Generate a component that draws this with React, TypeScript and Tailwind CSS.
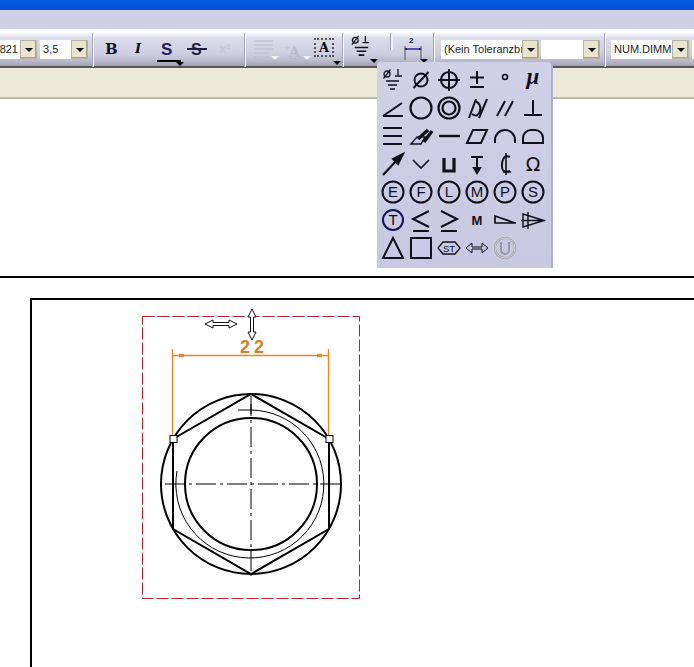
const ink = "#10101c";

function Combo({ value, width, className = "", clip }: any) {
  return (
    <div style={{ width }} className={"flex h-[19px] shrink-0 items-stretch bg-white " + (clip ? "" : "pl-[3px] ") + className}>
      <span className={"flex flex-1 overflow-hidden whitespace-nowrap text-[11px] leading-[18px] text-[#222] " + (clip ? "justify-end pr-[2px]" : "")}>{value}</span>
      <div className="flex w-[17px] shrink-0 items-center justify-center border border-[#b8b49c] bg-[#e8e4d0] shadow-[inset_-1px_-1px_0_#a8a490]">
        <Caret />
      </div>
    </div>
  );
}

function Caret({ light }: any) {
  return (
    <div className={"h-0 w-0 border-x-[4px] border-t-[4px] border-x-transparent " + (light ? "border-t-[#f0f0f4]" : "border-t-black")} />
  );
}

function Sep({ ml, mr }: any) {
  return (
    <div style={{ marginLeft: ml, marginRight: mr }} className="h-[34px] w-[2px] shrink-0 self-start border-l border-[#a4a4b8] bg-white" />
  );
}

function ToleranceIcon({ size = 24 }: any) {
  return (
    <svg width={size} height={size} viewBox="0 0 24 24" stroke={ink} fill="none" strokeWidth="1.3">
      <circle cx="5.5" cy="5.5" r="3" />
      <path d="M2 10L9 1" />
      <path d="M16 1v6M13 8h7" />
      <path d="M5 13h14M7 17h10M9 21h6" strokeWidth="1.6" />
    </svg>
  );
}

function Cell({ children }: any) {
  return (
    <div className="flex h-[28px] w-[28px] items-center justify-center">
      <svg width="28" height="28" viewBox="0 0 28 28" fill="none" stroke={ink} strokeWidth="2">
        {children}
      </svg>
    </div>
  );
}

function Letter({ ch, size = 12 }: any) {
  return (
    <text x="14" y={14 + size * 0.36} textAnchor="middle" fontSize={size} fontFamily="'Liberation Sans', sans-serif" stroke="none" fill={ink}>
      {ch}
    </text>
  );
}

function CircleLetter({ ch }: any) {
  return (
    <>
      <circle cx="14" cy="14" r="10.5" fill="none" />
      <Letter ch={ch} size={15} />
    </>
  );
}

const symbols: any[] = [
  <g transform="translate(3 3)" strokeWidth="1.3">
    <circle cx="5" cy="5" r="3" />
    <path d="M1.5 9.5L8.5 .5M16 0v6M13 7h7" />
    <path d="M4 12h13M6 16h9M8 20h5" strokeWidth="1.7" />
  </g>,
  <>
    <circle cx="14" cy="14" r="6.5" />
    <path d="M6.5 22L21.5 6" />
  </>,
  <>
    <circle cx="14" cy="14" r="8" strokeWidth="2.2" />
    <path d="M14 3v22M3 14h22" />
  </>,
  <path d="M14 5v13M7 11.5h14M7 21h14" />,
  <circle cx="14" cy="11" r="2.5" strokeWidth="1.6" />,
  <text x="14" y="18" textAnchor="middle" fontSize="23" fontWeight="bold" fontStyle="italic" fontFamily="'Liberation Serif', serif" stroke="none" fill={ink}>μ</text>,

  <path d="M4 22L23 9M4 22h20" />,
  <circle cx="14" cy="14" r="10.5" strokeWidth="2.2" />,
  <>
    <circle cx="14" cy="14" r="10.5" strokeWidth="2.2" />
    <circle cx="14" cy="14" r="6.5" strokeWidth="2.2" />
  </>,
  <>
    <path d="M6 24L13 5M16 24L24 5" />
    <path d="M12 7q7 3 5 10t-8 3" />
  </>,
  <path d="M6 22L14 7M14 22L22 7" />,
  <path d="M14 6v15M5 21h18" />,

  <path d="M4 6h19M4 14h19M4 22h19" strokeWidth="2.2" />,
  <>
    <path d="M4 22L10 15h8l-4 7z" strokeWidth="1.4" />
    <path d="M11 17L21 8M17 20L25 9" strokeWidth="3.4" />
  </>,
  <path d="M4 14h21" strokeWidth="2.4" />,
  <path d="M10 8h14l-6 13H4z" />,
  <path d="M4 21v-3a10 10 0 0 1 20 0v3" />,
  <path d="M4 21h20v-5a8 8 0 0 0-8-8h-4a8 8 0 0 0-8 8z" />,

  <>
    <path d="M4 25L18 10" strokeWidth="2.2" />
    <path d="M24 4L14 9l5 5z" fill={ink} />
  </>,
  <path d="M6 10l8 8 8-8" strokeWidth="1.6" />,
  <path d="M9 8v13h10V8" strokeWidth="3.2" />,
  <>
    <path d="M8 7h12M14 7v13" />
    <path d="M11 18l3 5 3-5z" fill={ink} />
  </>,
  <>
    <path d="M19 7q-7-3-8 7t8 7" />
    <path d="M15 3v22M12 22h8" strokeWidth="1.6" />
  </>,
  <text x="14" y="21" textAnchor="middle" fontSize="19" fontFamily="'DejaVu Sans', sans-serif" stroke="none" fill={ink}>Ω</text>,

  <CircleLetter ch="E" />,
  <CircleLetter ch="F" />,
  <CircleLetter ch="L" />,
  <CircleLetter ch="M" />,
  <CircleLetter ch="P" />,
  <CircleLetter ch="S" />,

  <g stroke="#14145a">
    <circle cx="14" cy="14" r="10" />
    <Letter ch="T" size={15} />
  </g>,
  <path d="M22 5L6 13l16 8M6 25h16" />,
  <path d="M6 5l16 8-16 8M6 25h16" />,
  <text x="14" y="19" textAnchor="middle" fontSize="13" fontWeight="bold" fontFamily="'Liberation Sans', sans-serif" stroke="none" fill={ink}>M</text>,
  <path d="M4 10l20 7H4zM4 17h21" strokeWidth="1.7" />,
  <path d="M4 8l21 6.500L4 21zM9 6v17M2 14.500h24" strokeWidth="1.400" />,

  <path d="M14 4L24 24H4z" />,
  <path d="M4 4h20v20H4z" />,
  <>
    <path d="M3 14l5-6h12l5 6-5 6H8z" strokeWidth="1.3" />
    <text x="14" y="17.500" textAnchor="middle" fontSize="9.500" fontFamily="'Liberation Sans', sans-serif" stroke="none" fill={ink}>ST</text>
  </>,
  <path d="M3 14l6-5v4h10V9l6 5-6 5v-4H9v4z" strokeWidth="1" />,
  <>
    <circle cx="14" cy="14" r="10" stroke="#9a9a9c" />
    <path d="M10 8v8a4 4 0 0 0 8 0V8" stroke="#9a9a9c" />
    <circle cx="14" cy="14" r="10" stroke="#e8e8ee" strokeWidth=".7" />
  </>,
];

function Palette() {
  return (
    <div className="absolute left-[377px] top-[62px] grid h-[206px] w-[176px] grid-cols-[repeat(6,28px)] content-start rounded-t-[4px] border-r-2 border-[#b0b0c8] bg-gradient-to-b from-[#d0d0e6] to-[#c8c8e2] pl-[2px] pt-[4px]">
      {symbols.map((s, i) => (
        <Cell key={i}>{s}</Cell>
      ))}
    </div>
  );
}

function Toolbar() {
  return (
    <div className="relative flex h-[39px] shrink-0 items-start border-b-2 border-[#55555c] bg-[linear-gradient(to_bottom,#ffffff_0%,#ffffff_8%,#dcdcea_24%,#cdcde0_70%,#b4b4c6_90%,#a0a0b2_100%)] pt-[4px]">
      <div className="mt-[7px] flex">
        <Combo value="2821" width={37} clip />
        <Combo value="3,5" width={48} className="ml-[3px]" />
      </div>
      <Sep ml={4} mr={0} />
      <div className="relative mt-[7px] flex h-[26px] w-[150px] shrink-0 items-start text-[#10102a]">
        <span className="absolute left-[11px] top-[-2px] font-['DejaVu_Serif'] text-[15px] font-bold">B</span>
        <span className="absolute left-[41px] top-[-1px] font-['DejaVu_Serif'] text-[13px] font-bold italic">I</span>
        <span className="absolute left-[67px] top-[-3px] text-[17px] font-bold text-[#1c1c60]">S</span>
        <div className="absolute left-[63px] top-[20px] h-[1.500px] w-[24px] bg-black" />
        <div className="absolute left-[82px] top-[22px] h-0 w-0 border-x-[4px] border-t-[4px] border-x-transparent border-t-black" />
        <span className="absolute left-[97px] top-[-2px] text-[16px] font-bold text-[#1c1c40]">S</span>
        <div className="absolute left-[93px] top-[8px] h-[1.500px] w-[20px] bg-[#1c1c40]" />
        <span className="absolute left-[125px] top-[-1px] text-[13px] font-bold text-[#c6c6d0]">x²</span>
      </div>
      <Sep ml={0} mr={0} />
      <div className="relative mt-[3px] h-[30px] w-[96px] shrink-0">
        <svg className="absolute left-[7px] top-[3px]" width="26" height="20" viewBox="0 0 26 20" stroke="#bcbcc8" strokeWidth="1.200">
          <path d="M1 2h19M1 6h19M1 10h19M1 14h15M1 18h15" />
        </svg>
        <span className="absolute left-[25px] top-[20px]"><Caret light /></span>
        <span className="absolute left-[38px] top-[3px] text-[11px] text-[#c4c4ce]">+</span>
        <span className="absolute left-[43px] top-[6px] font-['DejaVu_Serif'] text-[14px] font-bold text-[#bcbcc8] underline">A</span>
        <span className="absolute left-[57px] top-[20px]"><Caret light /></span>
        <div className="absolute left-[68px] top-[2px] flex h-[19px] w-[20px] items-center justify-center border-2 border-dotted border-[#55555f] font-['DejaVu_Serif'] text-[13px] font-bold text-black">A</div>
        <span className="absolute left-[87px] top-[25px]"><Caret /></span>
      </div>
      <Sep ml={0} mr={0} />
      <div className="relative mt-[1px] h-[32px] w-[50px] shrink-0">
        <span className="absolute left-[6px] top-[1px]"><ToleranceIcon size={23} /></span>
        <span className="absolute left-[26px] top-[25px]"><Caret /></span>
        <div className="absolute left-[47px] top-[-1px] h-[17px] w-[2px] bg-[#f0f0f6] shadow-[-1px_0_0_#a0a0b4]" />
      </div>
      <div className="relative mt-[1px] h-[32px] w-[39px] shrink-0">
        <svg className="absolute left-[9px] top-[7px]" width="20" height="22" viewBox="0 0 20 22" fill="none">
          <path d="M2 8h16" stroke="#2424a8" strokeWidth="1.500" />
          <path d="M2 5v14M18 5v14" stroke="#505060" />
          <path d="M1 8l3-1v2zM19 8l-3-1v2z" fill="#10104a" />
        </svg>
        <span className="absolute left-[15px] top-[1px] text-[8px] font-bold text-[#14143c]">2</span>
        <span className="absolute left-[26px] top-[25px]"><Caret /></span>
      </div>
      <Sep ml={0} mr={6} />
      <div className="mt-[7px] flex">
        <Combo value="(Kein Toleranzbı" width={98} />
        <Combo value="" width={59} className="ml-[2px]" />
      </div>
      <Sep ml={4} mr={5} />
      <div className="mt-[7px] flex">
        <Combo value="NUM.DIMM" width={78} />
        <div className="ml-[3px] h-[19px] w-[10px] bg-white" />
      </div>
    </div>
  );
}

function Drawing() {
  return (
    <svg className="block h-[367px] w-[662px]" viewBox="32 300 662 367" fill="none">
      <rect x="142.500" y="316.500" width="217" height="282" stroke="#bc2030" strokeDasharray="12 3" />

      <path d="M205 324l8-4v2.500h16V320l8 4-8 4v-2.500h-16v2.500z" stroke="#111" fill="white" />
      <path d="M252 309l4 8h-2.500v15h2.500l-4 8-4-8h2.500V317H248z" stroke="#111" fill="white" />

      <g stroke="#e8862c" strokeWidth="1.300">
        <path d="M172.500 349v88M328.500 349v88M172.500 355.500h156" />
        <path d="M179 355.500h5M317 355.500h5" strokeWidth="3.500" />
      </g>
      <text x="254" y="353" textAnchor="middle" fontSize="18" fontWeight="bold" letterSpacing="4" fontFamily="'Liberation Sans', sans-serif" fill="#d87c2c">22</text>

      <circle cx="251" cy="484" r="90" stroke="#000" strokeWidth="2" />
      <circle cx="251" cy="484" r="66" stroke="#000" strokeWidth="2" />
      <path d="M251 410A74 74 0 1 1 177 471" stroke="#000" />
      <path d="M238 410h13M251 404v10" stroke="#000" />
      <path d="M251 394L329 439V529L251 574L173 529V439z" stroke="#000" strokeWidth="2" />
      <path d="M251 396v180M165 484h176" stroke="#000" strokeDasharray="20 4 3 4" />

      <rect x="170" y="435.500" width="7" height="7" fill="white" stroke="#000" />
      <rect x="326" y="435.500" width="7" height="7" fill="white" stroke="#000" />
    </svg>
  );
}

export default function App() {
  return (
    <div className="relative flex h-[667px] w-[694px] flex-col overflow-hidden bg-white font-['Liberation_Sans',sans-serif]">
      <div className="h-[10px] shrink-0 bg-gradient-to-b from-[#0a5ce0] to-[#0450d4]" />
      <div className="h-[19px] shrink-0 bg-[#d0d0e4]" />
      <Toolbar />
      <div className="h-[31px] shrink-0 border-b-2 border-[#bdb9a8] bg-[#ece9d8]" />
      <div className="h-[179px] shrink-0 border-b-2 border-black bg-white" />
      <div className="flex-1 pl-[30px] pt-[20px]">
        <div className="h-full border-l-2 border-t-2 border-black">
          <Drawing />
        </div>
      </div>
      <Palette />
    </div>
  );
}
